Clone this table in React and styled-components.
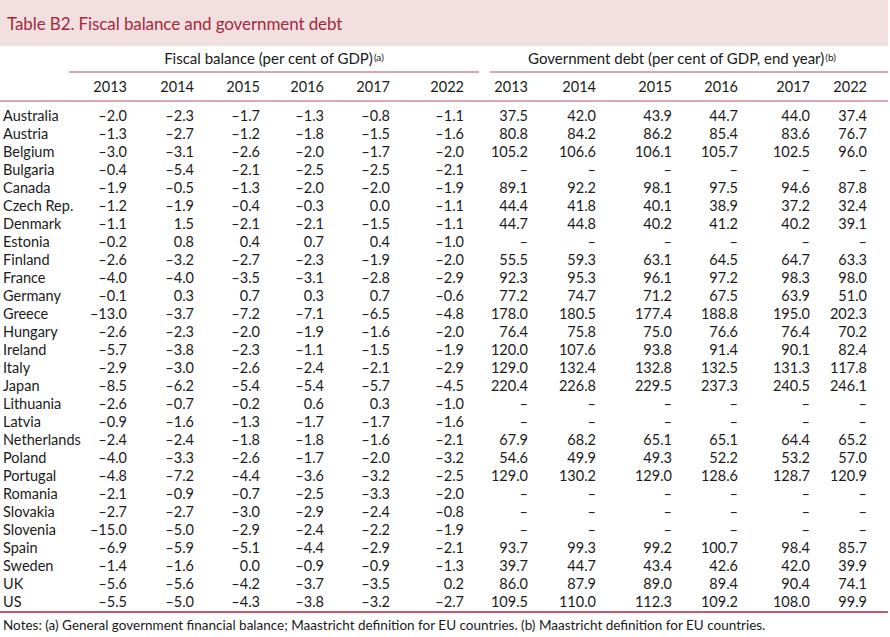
import React from 'react'
import styled, { createGlobalStyle } from 'styled-components'

const GlobalStyle = createGlobalStyle`
  body {
    margin: 0;
    background: #fff;
    font-family: Lato, 'Open Sans', sans-serif;
    color: #1a1a1a;
  }
`

const COLS = '70px 57px 67px 66px 64px 66px 74px 64px 68px 76px 66px 72px 57px'

const Page = styled.div`
  width: 888px;
`

const TitleBar = styled.div`
  height: 46px;
  background: #f2dfdf;
  display: flex;
  align-items: center;
  padding-left: 7px;
  font-size: 17px;
  color: #a4283d;
  letter-spacing: -0.1px;
`

const GroupRow = styled.div`
  display: flex;
  gap: 11px;
  padding-left: 69px;
  height: 27px;
`

const Group = styled.div`
  width: ${p => p.width || 'auto'};
  flex: ${p => (p.width ? 'none' : 1)};
  border-bottom: 2px solid #d9a7b0;
  text-align: center;
  padding-right: ${p => p.shift || 0}px;
  padding-top: 3px;
  font-size: 15px;
  line-height: 16px;
  box-sizing: border-box;
  white-space: nowrap;
`

const Sup = styled.span`
  font-size: 10px;
  vertical-align: 3px;
  margin-left: 1px;
`

const YearRow = styled.div`
  display: grid;
  grid-template-columns: ${COLS};
  height: 27px;
  border-bottom: 2px solid #d9a7b0;
  font-size: 14.5px;
  align-items: center;
`

const Body = styled.div`
  padding-top: 5px;
`

const Row = styled.div`
  display: grid;
  grid-template-columns: ${COLS};
  height: 18px;
  line-height: 18px;
  font-size: 14.5px;
`

const Label = styled.div`
  padding-left: 3px;
  white-space: nowrap;
`

const Cell = styled.div`
  text-align: right;
  white-space: nowrap;
`

const Notes = styled.div`
  border-top: 2px solid #c6596a;
  padding: 4px 0 0 3px;
  font-size: 13.5px;
  white-space: nowrap;
`

const years = ['2013', '2014', '2015', '2016', '2017', '2022']

const data = [
  ['Australia', '–2.0 –2.3 –1.7 –1.3 –0.8 –1.1', '37.5 42.0 43.9 44.7 44.0 37.4'],
  ['Austria', '–1.3 –2.7 –1.2 –1.8 –1.5 –1.6', '80.8 84.2 86.2 85.4 83.6 76.7'],
  ['Belgium', '–3.0 –3.1 –2.6 –2.0 –1.7 –2.0', '105.2 106.6 106.1 105.7 102.5 96.0'],
  ['Bulgaria', '–0.4 –5.4 –2.1 –2.5 –2.5 –2.1', '– – – – – –'],
  ['Canada', '–1.9 –0.5 –1.3 –2.0 –2.0 –1.9', '89.1 92.2 98.1 97.5 94.6 87.8'],
  ['Czech Rep.', '–1.2 –1.9 –0.4 –0.3 0.0 –1.1', '44.4 41.8 40.1 38.9 37.2 32.4'],
  ['Denmark', '–1.1 1.5 –2.1 –2.1 –1.5 –1.1', '44.7 44.8 40.2 41.2 40.2 39.1'],
  ['Estonia', '–0.2 0.8 0.4 0.7 0.4 –1.0', '– – – – – –'],
  ['Finland', '–2.6 –3.2 –2.7 –2.3 –1.9 –2.0', '55.5 59.3 63.1 64.5 64.7 63.3'],
  ['France', '–4.0 –4.0 –3.5 –3.1 –2.8 –2.9', '92.3 95.3 96.1 97.2 98.3 98.0'],
  ['Germany', '–0.1 0.3 0.7 0.3 0.7 –0.6', '77.2 74.7 71.2 67.5 63.9 51.0'],
  ['Greece', '–13.0 –3.7 –7.2 –7.1 –6.5 –4.8', '178.0 180.5 177.4 188.8 195.0 202.3'],
  ['Hungary', '–2.6 –2.3 –2.0 –1.9 –1.6 –2.0', '76.4 75.8 75.0 76.6 76.4 70.2'],
  ['Ireland', '–5.7 –3.8 –2.3 –1.1 –1.5 –1.9', '120.0 107.6 93.8 91.4 90.1 82.4'],
  ['Italy', '–2.9 –3.0 –2.6 –2.4 –2.1 –2.9', '129.0 132.4 132.8 132.5 131.3 117.8'],
  ['Japan', '–8.5 –6.2 –5.4 –5.4 –5.7 –4.5', '220.4 226.8 229.5 237.3 240.5 246.1'],
  ['Lithuania', '–2.6 –0.7 –0.2 0.6 0.3 –1.0', '– – – – – –'],
  ['Latvia', '–0.9 –1.6 –1.3 –1.7 –1.7 –1.6', '– – – – – –'],
  ['Netherlands', '–2.4 –2.4 –1.8 –1.8 –1.6 –2.1', '67.9 68.2 65.1 65.1 64.4 65.2'],
  ['Poland', '–4.0 –3.3 –2.6 –1.7 –2.0 –3.2', '54.6 49.9 49.3 52.2 53.2 57.0'],
  ['Portugal', '–4.8 –7.2 –4.4 –3.6 –3.2 –2.5', '129.0 130.2 129.0 128.6 128.7 120.9'],
  ['Romania', '–2.1 –0.9 –0.7 –2.5 –3.3 –2.0', '– – – – – –'],
  ['Slovakia', '–2.7 –2.7 –3.0 –2.9 –2.4 –0.8', '– – – – – –'],
  ['Slovenia', '–15.0 –5.0 –2.9 –2.4 –2.2 –1.9', '– – – – – –'],
  ['Spain', '–6.9 –5.9 –5.1 –4.4 –2.9 –2.1', '93.7 99.3 99.2 100.7 98.4 85.7'],
  ['Sweden', '–1.4 –1.6 0.0 –0.9 –0.9 –1.3', '39.7 44.7 43.4 42.6 42.0 39.9'],
  ['UK', '–5.6 –5.6 –4.2 –3.7 –3.5 0.2', '86.0 87.9 89.0 89.4 90.4 74.1'],
  ['US', '–5.5 –5.0 –4.3 –3.8 –3.2 –2.7', '109.5 110.0 112.3 109.2 108.0 99.9'],
]

export default function App() {
  return (
    <Page>
      <GlobalStyle />
      <TitleBar>Table B2. Fiscal balance and government debt</TitleBar>
      <GroupRow>
        <Group width="410px">
          Fiscal balance (per cent of GDP)<Sup>(a)</Sup>
        </Group>
        <Group shift={14}>
          Government debt (per cent of GDP, end year)<Sup>(b)</Sup>
        </Group>
      </GroupRow>
      <YearRow>
        <div />
        {[...years, ...years].map((y, i) => (
          <Cell key={i}>{y}</Cell>
        ))}
      </YearRow>
      <Body>
        {data.map(([name, fiscal, debt]) => (
          <Row key={name}>
            <Label>{name}</Label>
            {[...fiscal.split(' '), ...debt.split(' ')].map((v, i) => (
              <Cell key={i}>{v}</Cell>
            ))}
          </Row>
        ))}
      </Body>
      <Notes>
        Notes: (a) General government financial balance; Maastricht definition for EU countries. (b) Maastricht
        definition for EU countries.
      </Notes>
    </Page>
  )
}
